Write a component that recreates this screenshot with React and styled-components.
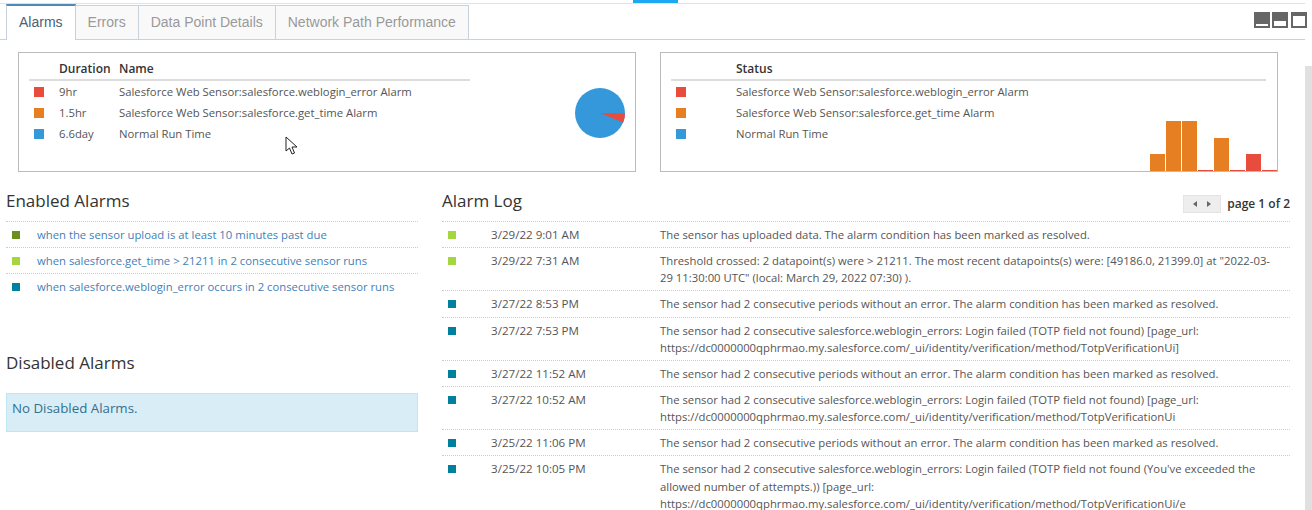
import React from "react";
import styled, { createGlobalStyle } from "styled-components";

const GlobalStyle = createGlobalStyle`
  html, body {
    margin: 0;
    padding: 0;
    background: #fff;
    overflow: hidden;
  }
  body {
    font-family: "Open Sans", "Noto Sans", sans-serif;
    font-size: 11.3px;
    line-height: 17.14px;
    color: #555;
  }
`;

const Page = styled.div`
  display: flex;
  width: 1312px;
  height: 510px;
  overflow: hidden;
  position: relative;
`;
const Main = styled.div`
  width: 1305px;
  flex: none;
`;
const ScrollTrack = styled.div`
  flex: 1;
  padding-top: 66px;
`;
const ScrollThumb = styled.div`
  height: 444px;
  background: #e0e0e0;
`;
const TopLine = styled.div`
  height: 3px;
  border-bottom: 1px solid #e2e2e2;
  padding-left: 633px;
`;
const Loader = styled.div`
  width: 45px;
  height: 3px;
  background: #1ea8f2;
`;
const TabBar = styled.div`
  display: flex;
  justify-content: space-between;
  height: 35px;
  padding-left: 6px;
  border-bottom: 1px solid #c8d2dc;
`;
const Tabs = styled.div`
  display: flex;
`;
const Tab = styled.div`
  height: ${(p) => (p.$active ? "34px" : "33px")};
  padding: 0 12px;
  display: flex;
  align-items: center;
  font-family: "Liberation Sans", Arial, sans-serif;
  font-size: 14px;
  color: ${(p) => (p.$active ? "#4a6274" : "#999")};
  background: ${(p) => (p.$active ? "#fff" : "#f9f9f9")};
  border: 1px solid #c8d2dc;
  border-left-width: ${(p) => (p.$first ? "1px" : "0")};
  border-top: ${(p) => (p.$active ? "2px solid #4b8bb5" : "1px solid #c8d2dc")};
  border-bottom: 0;
  margin-top: ${(p) => (p.$active ? "0" : "1px")};
  margin-bottom: ${(p) => (p.$active ? "-1px" : "0")};
`;
const PaneButtons = styled.div`
  display: flex;
  padding-top: 8px;
  margin-right: -2px;
`;
const PaneSvg = styled.svg`
  display: block;
  width: 16px;
  height: 16px;
  margin-left: ${(p) => p.$gap}px;
`;
const ChartRow = styled.div`
  display: flex;
  gap: 24px;
  padding: 12px 0 0 18px;
`;
const Panel = styled.div`
  position: relative;
  box-sizing: border-box;
  width: 618px;
  height: 120px;
  border: 1px solid #bbb;
  padding: 6px 0 0 10px;
`;
const LegendHead = styled.div`
  display: grid;
  grid-template-columns: ${(p) => p.$cols};
  width: ${(p) => p.$width}px;
  height: 19px;
  padding-bottom: 1px;
  border-bottom: 2px solid #ddd;
  font-size: 12px;
  font-weight: 600;
  color: #333;
  align-items: center;
`;
const LegendRow = styled.div`
  display: grid;
  grid-template-columns: ${(p) => p.$cols};
  height: 21px;
  align-items: center;
`;
const LegendRows = styled.div``;
const Swatch = styled.span`
  display: block;
  width: 10px;
  height: 10px;
  margin-left: 5px;
  background: ${(p) => p.$color};
`;
const PieWrap = styled.svg`
  position: absolute;
  left: 556px;
  top: 35px;
  width: 50px;
  height: 50px;
`;
const BarsWrap = styled.svg`
  position: absolute;
  right: 0;
  bottom: 0;
  width: 127px;
  height: 50px;
`;
const Columns = styled.div`
  display: flex;
  padding: 17px 0 0 6px;
`;
const LeftCol = styled.div`
  width: 412px;
  margin-right: 24px;
  flex: none;
`;
const RightCol = styled.div`
  width: 848px;
  flex: none;
`;
const SectionHead = styled.div`
  display: flex;
  justify-content: space-between;
  align-items: flex-end;
  height: 24px;
  padding-bottom: 8px;
`;
const Title = styled.h3`
  margin: 0;
  font-size: 17px;
  font-weight: 400;
  line-height: 24px;
  color: #333;
`;
const Pager = styled.div`
  display: flex;
  align-items: center;
  gap: 6px;
  font-size: 12px;
  font-weight: 600;
  color: #333;
`;
const PagerButton = styled.div`
  display: flex;
  align-items: center;
  justify-content: space-around;
  box-sizing: border-box;
  width: 38px;
  height: 18px;
  padding: 0 4px;
  background: #eee;
  border: 1px solid #e4e4e4;
`;
const Arrow = styled.span`
  width: 0;
  height: 0;
  border-top: 3px solid transparent;
  border-bottom: 3px solid transparent;
  border-left: ${(p) => (p.$left ? "0" : "4px solid #666")};
  border-right: ${(p) => (p.$left ? "4px solid #666" : "0")};
`;
const AlarmRow = styled.div`
  display: grid;
  grid-template-columns: 31px 1fr;
  height: 25px;
  border-top: 1px dotted #ccc;
`;
const RowSwatch = styled.span`
  display: block;
  width: 8px;
  height: 8px;
  margin: 9px 0 0 6px;
  background: ${(p) => p.$color};
`;
const AlarmLink = styled.a`
  color: #3f7fb8;
  line-height: 26px;
`;
const DisabledTitle = styled(Title)`
  margin-top: 52px;
`;
const Alert = styled.div`
  box-sizing: border-box;
  height: 39px;
  margin-top: 18px;
  padding: 0 5px;
  line-height: 28px;
  font-size: 13.3px;
  background: #d9edf7;
  border: 1px solid #bce8f1;
  color: #31708f;
`;
const LogRow = styled.div`
  display: grid;
  grid-template-columns: 49px 169px 615px;
  padding: 4px 0 4px;
  border-top: 1px dotted #ccc;
`;
const LogSwatch = styled(RowSwatch)`
  margin-top: 5px;
`;
const LogDate = styled.div`
  font-size: 11.6px;
`;
const LogText = styled.div`
  overflow-wrap: anywhere;
`;
const Cursor = styled.svg`
  position: absolute;
  left: 285px;
  top: 136px;
  width: 14px;
  height: 20px;
`;

const RED = "#e74c3c";
const ORANGE = "#e67e22";
const BLUE = "#3498db";
const OLIVE = "#6b8e1e";
const LIME = "#a6d63f";
const TEAL = "#00809f";

const WEB = "Salesforce Web Sensor:salesforce.weblogin_error Alarm";
const TIME = "Salesforce Web Sensor:salesforce.get_time Alarm";
const NORMAL = "Normal Run Time";

const durations = [
  { color: RED, duration: "9hr", name: WEB },
  { color: ORANGE, duration: "1.5hr", name: TIME },
  { color: BLUE, duration: "6.6day", name: NORMAL },
];

const bars = [
  { x: 0, h: 17, c: ORANGE },
  { x: 16, h: 50, c: ORANGE },
  { x: 32, h: 50, c: ORANGE },
  { x: 48, h: 1, c: RED },
  { x: 64, h: 33, c: ORANGE },
  { x: 80, h: 1, c: RED },
  { x: 96, h: 17, c: RED },
  { x: 112, h: 1, c: RED },
];

const enabled = [
  { color: OLIVE, text: "when the sensor upload is at least 10 minutes past due" },
  { color: LIME, text: "when salesforce.get_time > 21211 in 2 consecutive sensor runs" },
  { color: TEAL, text: "when salesforce.weblogin_error occurs in 2 consecutive sensor runs" },
];

const RESOLVED = "The sensor had 2 consecutive periods without an error. The alarm condition has been marked as resolved.";

const log = [
  { color: LIME, date: "3/29/22 9:01 AM", text: "The sensor has uploaded data. The alarm condition has been marked as resolved." },
  { color: LIME, date: "3/29/22 7:31 AM", text: 'Threshold crossed: 2 datapoint(s) were > 21211. The most recent datapoints(s) were: [49186.0, 21399.0] at "2022-03-29 11:30:00 UTC" (local: March 29, 2022 07:30) ).' },
  { color: TEAL, date: "3/27/22 8:53 PM", text: RESOLVED },
  { color: TEAL, date: "3/27/22 7:53 PM", text: "The sensor had 2 consecutive salesforce.weblogin_errors: Login failed (TOTP field not found) [page_url: https://dc0000000qphrmao.my.salesforce.com/_ui/identity/verification/method/TotpVerificationUi]" },
  { color: TEAL, date: "3/27/22 11:52 AM", text: RESOLVED },
  { color: TEAL, date: "3/27/22 10:52 AM", text: "The sensor had 2 consecutive salesforce.weblogin_errors: Login failed (TOTP field not found) [page_url: https://dc0000000qphrmao.my.salesforce.com/_ui/identity/verification/method/TotpVerificationUi" },
  { color: TEAL, date: "3/25/22 11:06 PM", text: RESOLVED },
  { color: TEAL, date: "3/25/22 10:05 PM", text: "The sensor had 2 consecutive salesforce.weblogin_errors: Login failed (TOTP field not found (You've exceeded the allowed number of attempts.)) [page_url: https://dc0000000qphrmao.my.salesforce.com/_ui/identity/verification/method/TotpVerificationUi/e" },
];

function PaneIcon({ gap, bar }) {
  return (
    <PaneSvg $gap={gap} viewBox="0 0 16 16">
      <rect width="16" height="16" fill="#666" />
      <rect x="2" y={bar} width="12" height={14 - bar} fill="#fff" />
    </PaneSvg>
  );
}

function App() {
  return (
    <Page>
      <GlobalStyle />
      <Main>
        <TopLine>
          <Loader />
        </TopLine>
        <TabBar>
          <Tabs>
            <Tab $active $first>Alarms</Tab>
            <Tab>Errors</Tab>
            <Tab>Data Point Details</Tab>
            <Tab>Network Path Performance</Tab>
          </Tabs>
          <PaneButtons>
            <PaneIcon gap={0} bar={12} />
            <PaneIcon gap={2} bar={9} />
            <PaneIcon gap={3} bar={4} />
          </PaneButtons>
        </TabBar>

        <ChartRow>
          <Panel>
            <LegendHead $cols="30px 60px 1fr" $width={441}>
              <span />
              <span>Duration</span>
              <span>Name</span>
            </LegendHead>
            <LegendRows>
              {durations.map((d) => (
                <LegendRow key={d.name} $cols="30px 60px 1fr">
                  <Swatch $color={d.color} />
                  <span>{d.duration}</span>
                  <span>{d.name}</span>
                </LegendRow>
              ))}
            </LegendRows>
            <PieWrap viewBox="0 0 50 50">
              <circle cx="25" cy="25" r="25" fill={BLUE} />
              <path d="M25 25 L50 25.5 A25 25 0 0 1 48.2 34.5 Z" fill={RED} />
            </PieWrap>
          </Panel>
          <Panel>
            <LegendHead $cols="65px 1fr" $width={595}>
              <span />
              <span>Status</span>
            </LegendHead>
            <LegendRows>
              {durations.map((d) => (
                <LegendRow key={d.name} $cols="65px 1fr">
                  <Swatch $color={d.color} />
                  <span>{d.name}</span>
                </LegendRow>
              ))}
            </LegendRows>
            <BarsWrap viewBox="0 0 127 50">
              {bars.map((b) => (
                <rect key={b.x} x={b.x} y={50 - b.h} width="15" height={b.h} fill={b.c} />
              ))}
            </BarsWrap>
          </Panel>
        </ChartRow>

        <Columns>
          <LeftCol>
            <SectionHead>
              <Title>Enabled Alarms</Title>
            </SectionHead>
            {enabled.map((a) => (
              <AlarmRow key={a.text}>
                <RowSwatch $color={a.color} />
                <AlarmLink>{a.text}</AlarmLink>
              </AlarmRow>
            ))}
            <DisabledTitle>Disabled Alarms</DisabledTitle>
            <Alert>No Disabled Alarms.</Alert>
          </LeftCol>
          <RightCol>
            <SectionHead>
              <Title>Alarm Log</Title>
              <Pager>
                <PagerButton>
                  <Arrow $left />
                  <Arrow />
                </PagerButton>
                page 1 of 2
              </Pager>
            </SectionHead>
            {log.map((l) => (
              <LogRow key={l.date}>
                <LogSwatch $color={l.color} />
                <LogDate>{l.date}</LogDate>
                <LogText>{l.text}</LogText>
              </LogRow>
            ))}
          </RightCol>
        </Columns>
      </Main>
      <ScrollTrack>
        <ScrollThumb />
      </ScrollTrack>
      <Cursor viewBox="0 0 14 20">
        <path d="M1 1 L1 15 L4.5 12 L7 18 L9.5 17 L7 11 L12 11 Z" fill="#fff" stroke="#222" strokeWidth="1" />
      </Cursor>
    </Page>
  );
}

export default App;
